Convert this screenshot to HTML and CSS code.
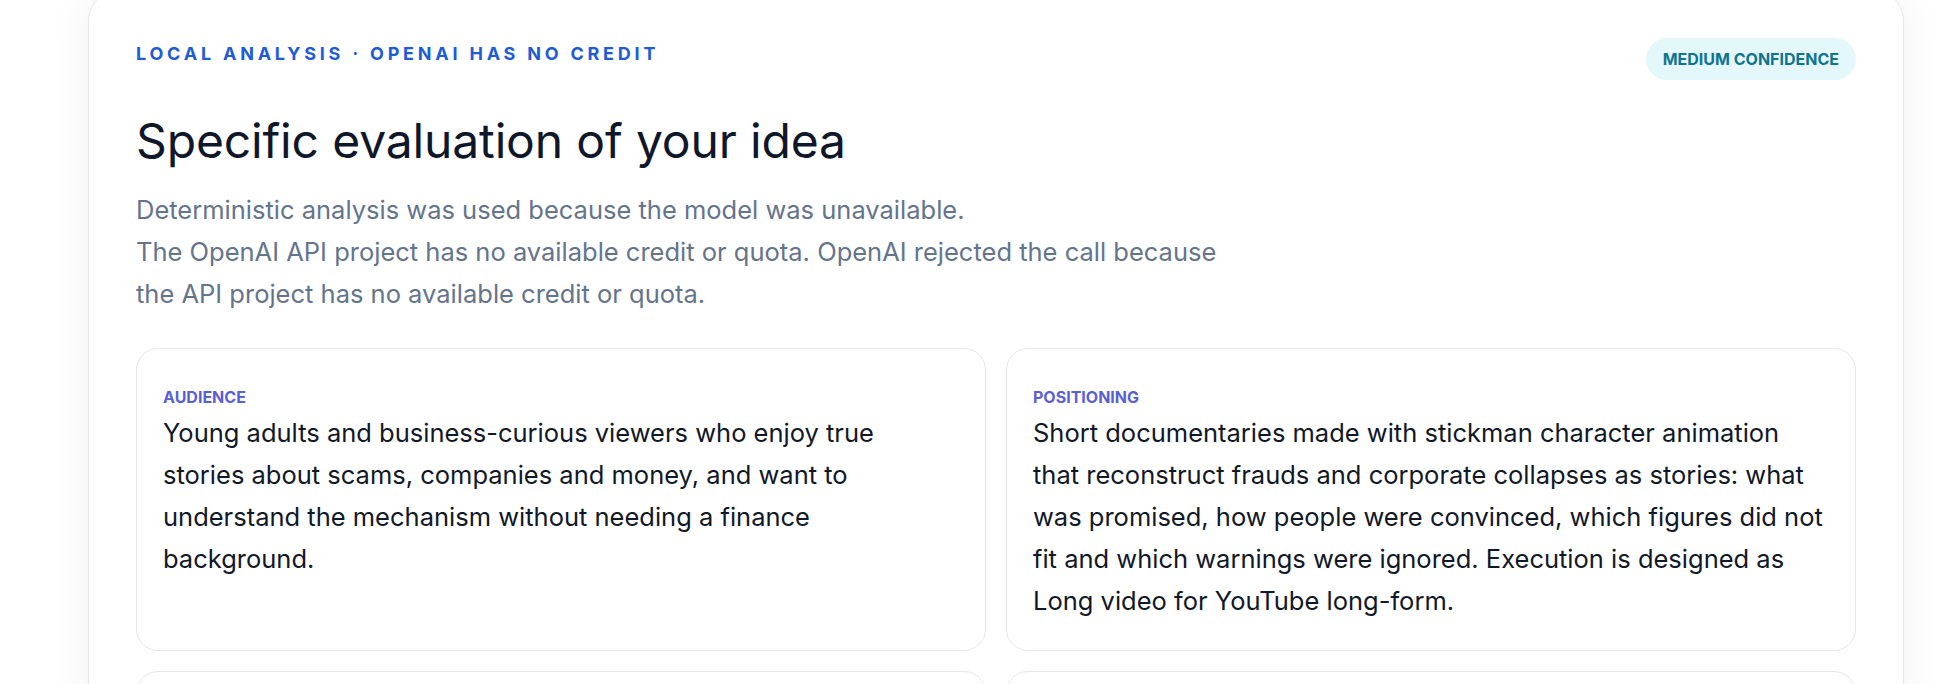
FILE: index.html
```html
<!DOCTYPE html>
<html lang="en">
<head>
	<meta charset="UTF-8">
	<title>Specific evaluation of your idea</title>
	<link rel="stylesheet" href="styles.css">
</head>
<body>
	<section class="report">
		<header class="report-head">
			<div class="report-title">
				<p class="eyebrow">Local analysis · OpenAI has no credit</p>
				<h1>Specific evaluation of your idea</h1>
				<p class="summary">Deterministic analysis was used because the model was unavailable.<br>
				The OpenAI API project has no available credit or quota. OpenAI rejected the call because the API project has no available credit or quota.</p>
			</div>
			<span class="badge">Medium confidence</span>
		</header>

		<div class="facts">
			<article class="fact">
				<h2>Audience</h2>
				<p>Young adults and business-curious viewers who enjoy true stories about scams, companies and money, and want to understand the mechanism without needing a finance background.</p>
			</article>
			<article class="fact">
				<h2>Positioning</h2>
				<p>Short documentaries made with stickman character animation that reconstruct frauds and corporate collapses as stories: what was promised, how people were convinced, which figures did not fit and which warnings were ignored. Execution is designed as Long video for YouTube long-form.</p>
			</article>
			<article class="fact fact-empty"></article>
			<article class="fact fact-empty"></article>
		</div>
	</section>
</body>
</html>
```

FILE: styles.css
```css
body {
    margin: 0;
    background-color: white;
    font-family: Inter, "Noto Sans", Arial, sans-serif;
    color: #111827;
}

.report {
    width: 1816px;
    box-sizing: border-box;
    margin: -11px 0 0 88px;
    padding: 48px 47px;
    background: white;
    border: 1px solid #e5e7eb;
    border-radius: 32px;
    box-shadow: 0 0 40px rgba(15, 23, 42, 0.06);
}

.report-head {
    display: flex;
    justify-content: space-between;
    align-items: flex-start;
}

.eyebrow {
    margin: 4px 0 0;
    font-size: 18px;
    line-height: 24px;
    font-weight: 700;
    letter-spacing: 0.21em;
    text-transform: uppercase;
    color: #1d5bd8;
}

h1 {
    margin: 47px 0 0;
    font-size: 48px;
    line-height: 56px;
    font-weight: 400;
    letter-spacing: -0.003em;
    color: #0f172a;
}

.summary {
    max-width: 1100px;
    margin: 20px 0 0;
    font-size: 25.5px;
    line-height: 42px;
    color: #64748b;
}

.badge {
    padding: 9px 17px;
    border-radius: 999px;
    background: #e4f7fb;
    color: #0e7490;
    font-size: 16px;
    line-height: 24px;
    font-weight: 700;
    text-transform: uppercase;
    white-space: nowrap;
}

.facts {
    display: grid;
    grid-template-columns: 1fr 1fr;
    gap: 20px;
    margin-top: 33px;
}

.fact {
    padding: 38px 26px 28px;
    border: 1px solid #e5e7eb;
    border-radius: 22px;
}

.fact-empty {
    min-height: 200px;
}

.fact h2 {
    margin: 0 0 5px;
    font-size: 16px;
    line-height: 20px;
    font-weight: 700;
    text-transform: uppercase;
    color: #5b5fd6;
}

.fact p {
    margin: 0;
    font-size: 25.5px;
    line-height: 42px;
    color: #111827;
}
```
